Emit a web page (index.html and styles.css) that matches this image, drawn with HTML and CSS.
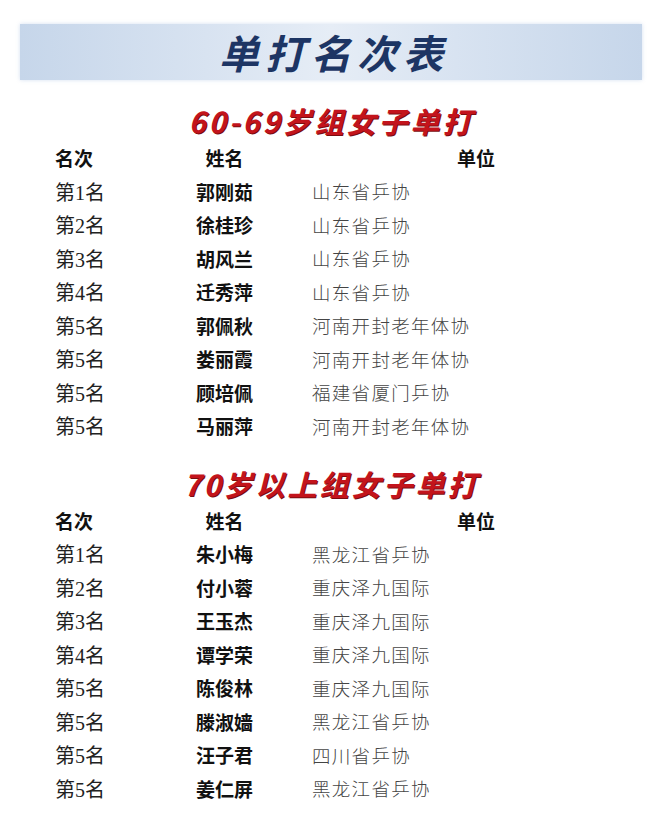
FILE: index.html
```html
<!DOCTYPE html>
<html lang="zh-CN">
<head>
<meta charset="utf-8">
<title>单打名次表</title>
<link rel="stylesheet" href="styles.css">
</head>
<body>
<div class="page">
  <div class="banner"><h1 class="title">单打名次表</h1></div>

  <h2 class="group">60-69岁组女子单打</h2>
  <div class="table">
    <div class="th c1">名次</div><div class="th c2">姓名</div><div class="th c3">单位</div>
    <div class="rank">第1名</div><div class="name">郭刚茹</div><div class="unit">山东省乒协</div>
    <div class="rank">第2名</div><div class="name">徐桂珍</div><div class="unit">山东省乒协</div>
    <div class="rank">第3名</div><div class="name">胡风兰</div><div class="unit">山东省乒协</div>
    <div class="rank">第4名</div><div class="name">迁秀萍</div><div class="unit">山东省乒协</div>
    <div class="rank">第5名</div><div class="name">郭佩秋</div><div class="unit">河南开封老年体协</div>
    <div class="rank">第5名</div><div class="name">娄丽霞</div><div class="unit">河南开封老年体协</div>
    <div class="rank">第5名</div><div class="name">顾培佩</div><div class="unit">福建省厦门乒协</div>
    <div class="rank">第5名</div><div class="name">马丽萍</div><div class="unit">河南开封老年体协</div>
  </div>

  <h2 class="group">70岁以上组女子单打</h2>
  <div class="table">
    <div class="th c1">名次</div><div class="th c2">姓名</div><div class="th c3">单位</div>
    <div class="rank">第1名</div><div class="name">朱小梅</div><div class="unit">黑龙江省乒协</div>
    <div class="rank">第2名</div><div class="name">付小蓉</div><div class="unit">重庆泽九国际</div>
    <div class="rank">第3名</div><div class="name">王玉杰</div><div class="unit">重庆泽九国际</div>
    <div class="rank">第4名</div><div class="name">谭学荣</div><div class="unit">重庆泽九国际</div>
    <div class="rank">第5名</div><div class="name">陈俊林</div><div class="unit">重庆泽九国际</div>
    <div class="rank">第5名</div><div class="name">滕淑嫱</div><div class="unit">黑龙江省乒协</div>
    <div class="rank">第5名</div><div class="name">汪子君</div><div class="unit">四川省乒协</div>
    <div class="rank">第5名</div><div class="name">姜仁屏</div><div class="unit">黑龙江省乒协</div>
  </div>
</div>
</body>
</html>
```

FILE: styles.css
```css
html, body {
  margin: 0;
  padding: 0;
  background: #ffffff;
}

.page {
  width: 660px;
  height: 814px;
  overflow: hidden;
  padding-top: 24px;
  box-sizing: border-box;
  font-family: "Noto Sans CJK SC", sans-serif;
}

.banner {
  margin: 0 18px 0 20px;
  height: 56px;
  display: flex;
  align-items: center;
  justify-content: center;
  background: linear-gradient(90deg, #c6d6ea 0%, #d8e3f1 30%, #e6edf6 50%, #d8e3f1 70%, #c6d6ea 100%);
  box-shadow: 0 0 4px rgba(200, 215, 235, 0.8);
}

.title {
  margin: 0;
  padding-left: 6px;
  font-size: 40px;
  line-height: 56px;
  font-weight: 700;
  letter-spacing: 6px;
  color: #1d3564;
  font-style: italic;
}

.group {
  margin: 0;
  padding: 22px 0 3px 3px;
  height: 36px;
  line-height: 36px;
  text-align: center;
  font-size: 29px;
  font-weight: 700;
  font-style: italic;
  letter-spacing: 3px;
  color: #c3141c;
  text-shadow: 1px 1px 0 #7a0c10;
}

.table {
  display: grid;
  grid-template-columns: 120px 99px 1fr;
  grid-auto-rows: 33.5px;
  align-items: center;
  padding: 0 20px 0 55px;
}

.th {
  font-size: 19px;
  font-weight: 700;
  color: #111;
}

.c2, .c3 {
  text-align: center;
}

.c3 {
  padding-left: 38px;
}

.rank {
  font-family: "Liberation Serif", "Noto Sans CJK SC", serif;
  font-size: 20px;
  color: #222;
}

.name {
  text-align: center;
  font-size: 19px;
  font-weight: 700;
  color: #111;
}

.unit {
  padding-left: 38px;
  font-size: 18.5px;
  font-weight: 300;
  letter-spacing: 1.3px;
  color: #444;
}
```
